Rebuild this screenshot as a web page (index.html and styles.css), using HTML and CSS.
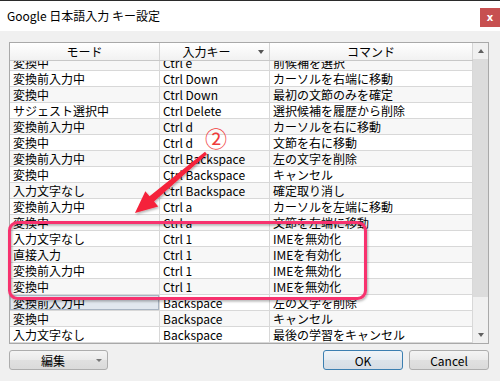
FILE: index.html
```html
<!DOCTYPE html>
<html lang="ja">
<head>
<meta charset="utf-8">
<title>Google 日本語入力 キー設定</title>
<link rel="stylesheet" href="styles.css">
</head>
<body>
<div class="window">
  <div class="titlebar">
    <span class="title">Google 日本語入力 キー設定</span>
    <div class="close">x</div>
  </div>
  <div class="client">
    <div class="table">
      <div class="grid-area">
        <div class="header">
          <div class="hcell">モード</div>
          <div class="hcell sort">入力キー<span class="sortarrow"></span></div>
          <div class="hcell">コマンド</div>
        </div>
        <div class="body">
          <div class="rows">
            <div class="row alt"><div class="cell">変換中</div><div class="cell">Ctrl e</div><div class="cell">前候補を選択</div></div>
            <div class="row"><div class="cell">変換前入力中</div><div class="cell">Ctrl Down</div><div class="cell">カーソルを右端に移動</div></div>
            <div class="row alt"><div class="cell">変換中</div><div class="cell">Ctrl Down</div><div class="cell">最初の文節のみを確定</div></div>
            <div class="row"><div class="cell">サジェスト選択中</div><div class="cell">Ctrl Delete</div><div class="cell">選択候補を履歴から削除</div></div>
            <div class="row alt"><div class="cell">変換前入力中</div><div class="cell">Ctrl d</div><div class="cell">カーソルを右に移動</div></div>
            <div class="row"><div class="cell">変換中</div><div class="cell">Ctrl d</div><div class="cell">文節を右に移動</div></div>
            <div class="row alt"><div class="cell">変換前入力中</div><div class="cell">Ctrl Backspace</div><div class="cell">左の文字を削除</div></div>
            <div class="row"><div class="cell">変換中</div><div class="cell">Ctrl Backspace</div><div class="cell">キャンセル</div></div>
            <div class="row alt"><div class="cell">入力文字なし</div><div class="cell">Ctrl Backspace</div><div class="cell">確定取り消し</div></div>
            <div class="row"><div class="cell">変換前入力中</div><div class="cell">Ctrl a</div><div class="cell">カーソルを左端に移動</div></div>
            <div class="row alt"><div class="cell">変換中</div><div class="cell">Ctrl a</div><div class="cell">文節を左端に移動</div></div>
            <div class="row"><div class="cell">入力文字なし</div><div class="cell">Ctrl 1</div><div class="cell">IMEを無効化</div></div>
            <div class="row alt"><div class="cell">直接入力</div><div class="cell">Ctrl 1</div><div class="cell">IMEを有効化</div></div>
            <div class="row"><div class="cell">変換前入力中</div><div class="cell">Ctrl 1</div><div class="cell">IMEを無効化</div></div>
            <div class="row alt"><div class="cell">変換中</div><div class="cell">Ctrl 1</div><div class="cell">IMEを無効化</div></div>
            <div class="row"><div class="cell current">変換前入力中</div><div class="cell">Backspace</div><div class="cell">左の文字を削除</div></div>
            <div class="row alt"><div class="cell">変換中</div><div class="cell">Backspace</div><div class="cell">キャンセル</div></div>
            <div class="row"><div class="cell">入力文字なし</div><div class="cell">Backspace</div><div class="cell">最後の学習をキャンセル</div></div>
          </div>
        </div>
      </div>
      <div class="scrollbar">
        <div class="sb-btn"><span class="tri-up"></span></div>
        <div class="sb-thumb"></div>
        <div class="sb-track"></div>
        <div class="sb-btn"><span class="tri-down"></span></div>
      </div>
    </div>
    <div class="footer">
      <button class="btn edit"><span class="btn-label">編集</span><span class="caret"></span></button>
      <div class="spacer"></div>
      <button class="btn ok">OK</button>
      <button class="btn cancel">Cancel</button>
    </div>
  </div>
  <svg class="annot" width="500" height="381" viewBox="0 0 500 381">
    <defs>
      <filter id="sh" x="-10%" y="-10%" width="120%" height="130%">
        <feDropShadow dx="1" dy="1.5" stdDeviation="1.2" flood-color="#000" flood-opacity="0.3"/>
      </filter>
    </defs>
    <rect x="9.5" y="222.5" width="356" height="76" rx="8" ry="8" fill="none" stroke="#f7336e" stroke-width="3" filter="url(#sh)"/>
    <polygon points="205.03,151.86 149.54,196.13 145.35,191.17 135,213 158.25,206.43 154.06,201.47 206.97,154.14" fill="#f5223a" filter="url(#sh)"/>
    <text x="216" y="147" text-anchor="middle" class="num">②</text>
  </svg>
</div>
</body>
</html>
```

FILE: styles.css
```css
html, body {
  margin: 0;
  padding: 0;
}
body {
  width: 500px;
  height: 381px;
  overflow: hidden;
  background: #f0f0f0;
  font-family: "Noto Sans CJK JP", "Noto Sans", sans-serif;
  font-size: 12px;
  color: #000;
}
.window {
  position: relative;
  width: 500px;
  height: 381px;
}
.titlebar {
  height: 30px;
  border-top: 1px solid #2b2b2b;
  background: #fff;
  display: flex;
  justify-content: space-between;
  align-items: flex-start;
}
.title {
  padding-left: 7px;
  line-height: 30px;
  font-size: 12px;
}
.close {
  width: 20px;
  height: 19px;
  margin-top: 7px;
  background: #c75050;
  color: #fff;
  font-family: "DejaVu Sans", sans-serif;
  font-size: 10px;
  font-weight: bold;
  display: flex;
  align-items: center;
  justify-content: center;
}
.client {
  padding: 11px 11px 0 9px;
}
.table {
  display: flex;
  width: 480px;
  height: 302px;
  box-sizing: border-box;
  border: 1px solid #a9a9a9;
  background: #fff;
}
.grid-area {
  width: 463px;
  display: flex;
  flex-direction: column;
}
.header {
  display: grid;
  grid-template-columns: 150px 110px 203px;
  height: 18px;
  box-sizing: border-box;
  border-bottom: 1px solid #c8c8c8;
  background: linear-gradient(#ffffff, #f1f1f1);
}
.hcell {
  border-right: 1px solid #d5d5d5;
  text-align: center;
  line-height: 17px;
  font-size: 12px;
  position: relative;
}
.hcell.sort {
  padding-right: 16px;
}
.sortarrow {
  position: absolute;
  right: 5px;
  top: 7px;
  width: 0;
  height: 0;
  border-left: 3.5px solid transparent;
  border-right: 3.5px solid transparent;
  border-top: 4px solid #555;
}
.body {
  flex: 1;
  overflow: hidden;
}
.rows {
  margin-top: -6px;
}
.row {
  display: grid;
  grid-template-columns: 150px 110px 203px;
  height: 16px;
  background: #fff;
}
.row.alt {
  background: #f7f7f7;
}
.cell {
  box-sizing: border-box;
  border-right: 1px solid #d8d8d8;
  border-bottom: 1px solid #d8d8d8;
  padding-left: 3px;
  line-height: 15px;
  white-space: nowrap;
  overflow: hidden;
}
.cell.current {
  background: #e1e7ee;
  box-shadow: inset 0 0 0 1px #a9b4c2;
}
.scrollbar {
  width: 15px;
  display: flex;
  flex-direction: column;
  background: #f0f0f0;
}
.sb-btn {
  height: 16px;
  display: flex;
  align-items: center;
  justify-content: center;
  background: #f0f0f0;
}
.sb-thumb {
  height: 238px;
  background: #dcdcdc;
}
.sb-track {
  flex: 1;
}
.tri-up {
  width: 0;
  height: 0;
  border-left: 3.5px solid transparent;
  border-right: 3.5px solid transparent;
  border-bottom: 4px solid #606060;
}
.tri-down {
  width: 0;
  height: 0;
  border-left: 3.5px solid transparent;
  border-right: 3.5px solid transparent;
  border-top: 4px solid #606060;
}
.footer {
  display: flex;
  margin-top: 6px;
  gap: 6px;
}
.spacer {
  flex: 1;
}
.btn {
  height: 20px;
  box-sizing: border-box;
  border: 1px solid #adadad;
  border-radius: 3px;
  background: linear-gradient(#f4f4f4, #eaeaea 50%, #e0e0e0 51%, #dadada);
  font-family: "Noto Sans CJK JP", "Noto Sans", sans-serif;
  font-size: 12px;
  color: #000;
  padding: 0;
  line-height: 17px;
}
.btn.edit {
  width: 99px;
  display: flex;
  align-items: center;
}
.btn-label {
  flex: 1;
  text-align: center;
}
.caret {
  width: 0;
  height: 0;
  margin-right: 5px;
  border-left: 3px solid transparent;
  border-right: 3px solid transparent;
  border-top: 3px solid #777;
}
.btn.ok {
  width: 80px;
  border-color: #3c7fb1;
  background: linear-gradient(#f0f4f8, #e6ecf2 50%, #dce3ea 51%, #d6dde5);
}
.btn.cancel {
  width: 80px;
}
.annot {
  position: absolute;
  left: 0;
  top: 0;
  pointer-events: none;
}
.num {
  font-family: "Noto Sans CJK JP", sans-serif;
  font-size: 22px;
  fill: #f03c3c;
}
```
